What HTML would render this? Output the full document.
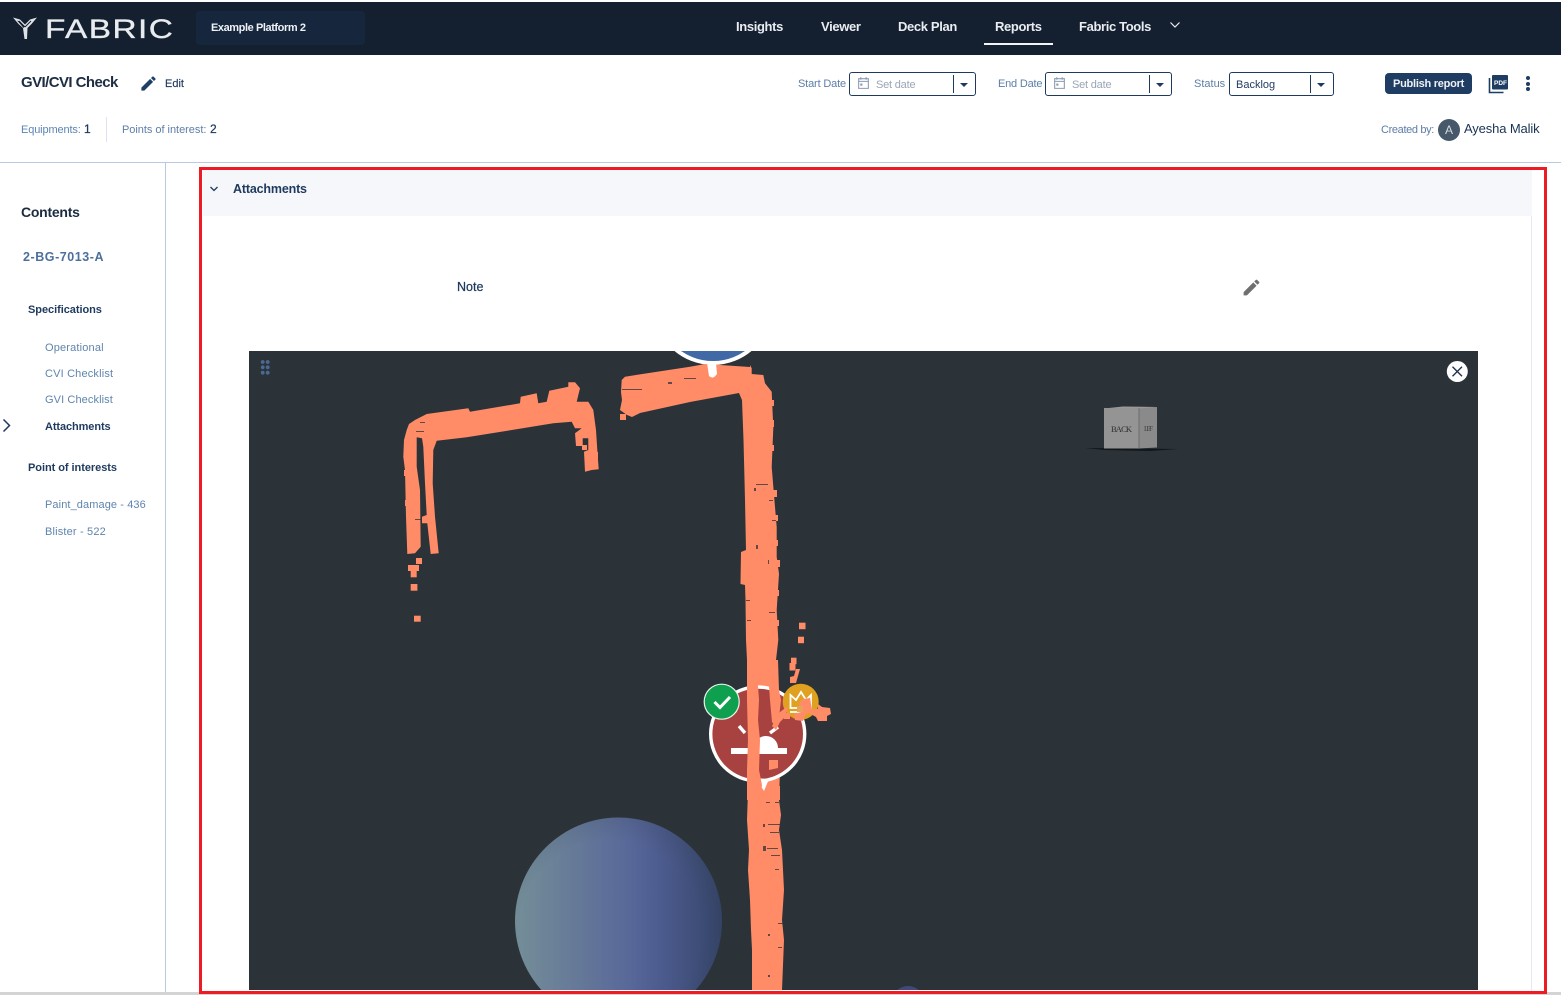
<!DOCTYPE html>
<html lang="en">
<head>
<meta charset="utf-8">
<title>GVI/CVI Check</title>
<style>
html,body{margin:0;padding:0;background:#fff;width:1561px;height:995px;overflow:hidden}
body{position:relative;font-family:"Liberation Sans",sans-serif;color:#1f3a5f}
.a{position:absolute;box-sizing:border-box}
.t{position:absolute;white-space:nowrap;line-height:16px;height:16px}
.nav{font-size:13px;font-weight:bold;color:#e9edf2;letter-spacing:-.36px;top:19px}
.lbl{font-size:11px;color:#5d7ea8;top:76px}
.box{position:absolute;top:72px;height:24px;border:1px solid #1f3a5f;border-radius:3px;background:#fff;box-sizing:border-box}
.sep{position:absolute;top:75px;width:1px;height:18px;background:#1f3a5f}
.caret{position:absolute;top:83px;width:0;height:0;border-left:4px solid transparent;border-right:4px solid transparent;border-top:4px solid #1f3a5f}
.ph{font-size:11px;color:#9aa6b6;top:77px;letter-spacing:-.2px}
.side{font-size:11px;color:#5f84ae;letter-spacing:.17px}
.sideb{font-size:11px;font-weight:bold;color:#1f3a5f}
</style>
</head>
<body>
<!-- top nav -->
<div class="a" style="left:0;top:2px;width:1561px;height:53px;background:#141f2f"></div>
<svg class="a" style="left:12px;top:16px" width="26" height="24" viewBox="0 0 26 24"><path d="M1 1.5 L8 3.5 L13 8.5 L18 3.5 L25 1.5 L19.5 8 L15.5 12 L15 23 L12.5 23 L11 12 L6.5 8 Z M5 4.5 L9.5 9.5 L11.5 12 L12.5 10.5 L8 5.5 Z" fill="#dfe3e7"/><path d="M13 11 L19 5" stroke="#141f2f" stroke-width="1"/><path d="M13 11 L7 5" stroke="#141f2f" stroke-width="1"/></svg>
<div class="t" style="left:45px;top:17px;height:24px;line-height:24px;font-size:27px;color:#e9ecef;letter-spacing:1.2px;transform:scaleX(1.235);transform-origin:0 50%;-webkit-text-stroke:.35px #e9ecef">FABRIC</div>
<div class="a" style="left:196px;top:11px;width:169px;height:34px;background:#15263d;border-radius:3px"></div>
<div class="t" style="left:211px;top:20px;font-size:11px;font-weight:bold;color:#eef1f5;letter-spacing:-.42px">Example Platform 2</div>
<div class="t nav" style="left:736px">Insights</div>
<div class="t nav" style="left:821px">Viewer</div>
<div class="t nav" style="left:898px">Deck Plan</div>
<div class="t nav" style="left:995px">Reports</div>
<div class="t nav" style="left:1079px">Fabric Tools</div>
<svg class="a" style="left:1169px;top:21px" width="12" height="8" viewBox="0 0 12 8"><path d="M1.5 1.5 L6 6 L10.5 1.5" fill="none" stroke="#e9edf2" stroke-width="1.2"/></svg>
<div class="a" style="left:984px;top:43px;width:69px;height:2px;background:#f2f4f7"></div>

<!-- sub header -->
<div class="t" style="left:21px;top:75px;font-size:15px;font-weight:bold;color:#1d2d42;letter-spacing:-.57px">GVI/CVI Check</div>
<svg class="a" style="left:139px;top:74px" width="19" height="19" viewBox="0 0 24 24"><path fill="#1f3f66" d="M3 17.25V21h3.75L17.81 9.94l-3.75-3.75L3 17.25zM20.71 7.04a1 1 0 0 0 0-1.41l-2.34-2.34a1 1 0 0 0-1.41 0l-1.83 1.83 3.75 3.75 1.83-1.83z"/></svg>
<div class="t" style="left:165px;top:76px;font-size:11px;color:#1f3a5f;-webkit-text-stroke:.15px #1f3a5f">Edit</div>
<div class="t" style="left:21px;top:122px;font-size:11px;color:#5d84b3;letter-spacing:-.13px">Equipments:</div>
<div class="t" style="left:84px;top:121px;font-size:12px;color:#1f3a5f;-webkit-text-stroke:.25px #1f3a5f">1</div>
<div class="a" style="left:106px;top:117px;width:1px;height:25px;background:#dde4ef"></div>
<div class="t" style="left:122px;top:122px;font-size:11px;color:#5d7ea8;letter-spacing:-.03px">Points of interest:</div>
<div class="t" style="left:210px;top:121px;font-size:12px;color:#1f3a5f;-webkit-text-stroke:.25px #1f3a5f">2</div>

<div class="t lbl" style="left:798px;letter-spacing:-.15px">Start Date</div>
<div class="box" style="left:849px;width:127px"></div>
<svg class="a" style="left:857px;top:76px" width="13" height="14" viewBox="0 0 12 13"><path d="M1.5 2.5h9v9h-9z M1.5 5h9 M3.5 1v2.5 M8.5 1v2.5" fill="none" stroke="#8b9cb1" stroke-width="1"/><rect x="3" y="7" width="2" height="2" fill="#8b9cb1"/></svg>
<div class="t ph" style="left:876px">Set date</div>
<div class="sep" style="left:953px"></div>
<div class="caret" style="left:960px"></div>

<div class="t lbl" style="left:998px;letter-spacing:-.2px">End Date</div>
<div class="box" style="left:1045px;width:127px"></div>
<svg class="a" style="left:1053px;top:76px" width="13" height="14" viewBox="0 0 12 13"><path d="M1.5 2.5h9v9h-9z M1.5 5h9 M3.5 1v2.5 M8.5 1v2.5" fill="none" stroke="#8b9cb1" stroke-width="1"/><rect x="3" y="7" width="2" height="2" fill="#8b9cb1"/></svg>
<div class="t ph" style="left:1072px">Set date</div>
<div class="sep" style="left:1149px"></div>
<div class="caret" style="left:1156px"></div>

<div class="t lbl" style="left:1194px">Status</div>
<div class="box" style="left:1229px;width:105px"></div>
<div class="t" style="left:1236px;top:77px;font-size:11px;color:#1f3a5f">Backlog</div>
<div class="sep" style="left:1310px"></div>
<div class="caret" style="left:1317px"></div>

<div class="a" style="left:1385px;top:73px;width:87px;height:21px;background:#1f3d63;border-radius:4px"></div>
<div class="t" style="left:1393px;top:76px;font-size:11px;font-weight:bold;color:#eef2f6;letter-spacing:-.25px">Publish report</div>
<svg class="a" style="left:1488px;top:74px" width="21" height="20" viewBox="0 0 21 20"><path d="M1.5 4v14.5h14" fill="none" stroke="#1f3d63" stroke-width="1.6"/><rect x="4" y="1" width="16" height="14.5" rx="1" fill="#1f3d63"/><text x="6" y="11" font-family="Liberation Sans" font-size="6.5" font-weight="bold" fill="#fff">PDF</text></svg>
<div class="a" style="left:1526px;top:76px;width:4px;height:4px;border-radius:50%;background:#1f3d63"></div>
<div class="a" style="left:1526px;top:82px;width:4px;height:4px;border-radius:50%;background:#1f3d63"></div>
<div class="a" style="left:1526px;top:87px;width:4px;height:4px;border-radius:50%;background:#1f3d63"></div>

<div class="t" style="left:1381px;top:122px;font-size:11px;color:#5d7ea8;letter-spacing:-.35px">Created by:</div>
<div class="a" style="left:1438px;top:119px;width:22px;height:22px;border-radius:50%;background:#47586a"></div>
<div class="t" style="left:1438px;top:122px;width:22px;text-align:center;font-size:12px;color:#d5dbe1">A</div>
<div class="t" style="left:1464px;top:121px;font-size:13px;color:#1a3354;letter-spacing:-.13px">Ayesha Malik</div>

<div class="a" style="left:0;top:162px;width:1561px;height:1px;background:#b9c9e1"></div>

<!-- sidebar -->
<div class="a" style="left:165px;top:163px;width:1px;height:829px;background:#b9c9e1"></div>
<div class="t" style="left:21px;top:204px;font-size:14px;font-weight:bold;color:#1a2b40;letter-spacing:-.25px">Contents</div>
<div class="t" style="left:23px;top:249px;font-size:12.5px;font-weight:bold;color:#4d6f9c;letter-spacing:.55px">2-BG-7013-A</div>
<div class="t sideb" style="left:28px;top:302px;letter-spacing:-.05px">Specifications</div>
<div class="t side" style="left:45px;top:340px">Operational</div>
<div class="t side" style="left:45px;top:366px">CVI Checklist</div>
<div class="t side" style="left:45px;top:392px;letter-spacing:.1px">GVI Checklist</div>
<svg class="a" style="left:1px;top:418px" width="11" height="15" viewBox="0 0 11 15"><path d="M2.5 1.5 L8.5 7.5 L2.5 13.5" fill="none" stroke="#1f3a5f" stroke-width="1.5"/></svg>
<div class="t sideb" style="left:45px;top:419px;letter-spacing:-.1px">Attachments</div>
<div class="t sideb" style="left:28px;top:460px;letter-spacing:-.05px">Point of interests</div>
<div class="t side" style="left:45px;top:497px;letter-spacing:.1px">Paint_damage - 436</div>
<div class="t side" style="left:45px;top:524px">Blister - 522</div>

<!-- main panel -->
<div class="a" style="left:203px;top:170px;width:1329px;height:46px;background:#f6f7fb"></div>
<div class="a" style="left:1531px;top:216px;width:1px;height:775px;background:#e3e8f2"></div>
<svg class="a" style="left:209px;top:185px" width="10" height="8" viewBox="0 0 10 8"><path d="M1.5 2 L5 5.5 L8.5 2" fill="none" stroke="#1f3a5f" stroke-width="1.3"/></svg>
<div class="t" style="left:233px;top:181px;font-size:12.5px;font-weight:bold;color:#1f3a5f;letter-spacing:-.17px">Attachments</div>
<div class="t" style="left:457px;top:279px;font-size:12.5px;color:#1f3a5f;-webkit-text-stroke:.25px #1f3a5f">Note</div>
<svg class="a" style="left:1241px;top:277px" width="21" height="21" viewBox="0 0 24 24"><path fill="#6f6f6f" d="M3 17.25V21h3.75L17.81 9.94l-3.75-3.75L3 17.25zM20.71 7.04a1 1 0 0 0 0-1.41l-2.34-2.34a1 1 0 0 0-1.41 0l-1.83 1.83 3.75 3.75 1.83-1.83z"/></svg>

<!-- 3D view -->
<svg class="a" style="left:249px;top:351px" width="1229" height="639" viewBox="249 351 1229 639">
  <defs>
    <linearGradient id="sph" x1="0" y1="0" x2="1" y2="0">
      <stop offset="0" stop-color="#748e98"/>
      <stop offset=".2" stop-color="#6a8098"/>
      <stop offset=".55" stop-color="#586899"/>
      <stop offset=".72" stop-color="#4b5a8c"/>
      <stop offset="1" stop-color="#35456a"/>
    </linearGradient>
    <radialGradient id="shade" cx=".46" cy=".55" r=".55">
      <stop offset=".8" stop-color="#2b3339" stop-opacity="0"/>
      <stop offset="1" stop-color="#2b3339" stop-opacity=".12"/>
    </radialGradient>
  </defs>
  <rect x="249" y="351" width="1229" height="639" fill="#2b3339"/>
  <!-- spheres -->
  <circle cx="618.5" cy="921" r="103.5" fill="url(#sph)"/>
  <circle cx="618.5" cy="921" r="103.5" fill="url(#shade)"/>
  <ellipse cx="908" cy="1002" rx="16" ry="16" fill="#3f4a78"/>
  <!-- blue top marker -->
  <circle cx="713" cy="305" r="58" fill="#4169a5" stroke="#fff" stroke-width="4"/>
  <!-- cube -->
  <path d="M1085 448 L1178 449 L1150 451 L1105 450Z" fill="#11171b"/>
  <path d="M1104 408.5 L1123 406.5 L1157 407 L1139 409 Z" fill="#9a9a9a"/>
  <rect x="1104" y="408" width="35" height="40.5" fill="#949494"/>
  <path d="M1139 408.5 L1157 407 L1157 447.5 L1139 448.5Z" fill="#8a8a8a"/>
  <path d="M1139 408 V449" stroke="#5f5f5f" stroke-width=".7"/>
  <text x="1111" y="432" font-family="Liberation Serif" font-size="8.5" fill="#2e2e2e" textLength="21">BACK</text>
  <text x="1144" y="431" font-family="Liberation Serif" font-size="7" fill="#3d3d3d" textLength="9">LEF</text>
  <!-- orange left shape -->
  <g fill="#ff8c66">
    <path d="M406.7 430 L409 424 L415 420 L426.7 414 L468.3 408.3 L470 411.7 L520 403.3 L520.7 396.7 L536.7 393.3 L538.3 403.3 L546.7 401.7 L549.3 390.7 L568.3 386.7 L568.3 382.3 L575 382.3 L580 388.3 L576.7 401.7 L588.3 401.7 L593.3 410 L596 430 L597.3 450 L598.7 469.3 L591.7 470 L585 471.7 L584 451.7 L588.3 450 L588.3 438.3 L582.7 438.3 L582.7 446 L576 446 L575 433.3 L581.7 428.3 L575 428.3 L571.7 421.7 L553.3 423.3 L466.7 437.3 L436.7 440.7 L433.3 450 L432.7 483.3 L435 516.7 L438.7 553.3 L430.7 554 L427.3 523.3 L422 523.3 L422 516.7 L426.7 515 L425 483.3 L423.3 446.7 L422 438.3 L416.7 437.3 L416.7 466.7 L420 490 L420.7 546.7 L415 553.3 L407.3 554 L406 516.7 L405 470 L403.3 456.7 L404 440 Z"/>
    <rect x="416" y="558" width="6" height="6"/>
    <rect x="408" y="565" width="11" height="6"/>
    <rect x="410.7" y="570" width="6" height="7.3"/>
    <rect x="410.7" y="584" width="6.7" height="6.7"/>
    <rect x="414" y="615.7" width="6.7" height="6"/>
    <rect x="620" y="414" width="6" height="6"/>
    <!-- right L + band -->
    <path d="M621.7 380 L625 376.7 L690 366.7 L705 364 L750 367 L750 365 L751.7 368.3 L751.7 374 L763.3 375 L765 383.3 L771.7 391.7 L773.3 428 L771.7 467 L775 507 L776.7 527 L776.7 557 L779 573.7 L776.7 610 L778.3 640 L776 660 L778 690 L780 720 L780 770 L779 800 L781 815 L779 830 L782 850 L783 870 L784 890 L782 920 L784 940 L782 990 L752 990 L752 950 L751 930 L750 900 L748 870 L749 850 L747 820 L748 790 L747 760 L748 720 L747 690 L747 660 L746 640 L745.5 600 L745 585 L740.5 584 L741 552 L746 550 L745 500 L743.5 440 L742 400 L739 393 L690 402 L640 413 L632 417 L627 415 L620 410 L622 400 L621 392 Z"/>
    <!-- jagged edge blocks -->
    <rect x="768" y="400" width="6" height="6"/><rect x="769" y="420" width="5" height="7"/><rect x="769" y="445" width="5" height="6"/>
    <rect x="771" y="490" width="6" height="7"/><rect x="772" y="515" width="6" height="6"/><rect x="773" y="540" width="5" height="6"/>
    <rect x="775" y="560" width="5" height="7"/><rect x="774" y="590" width="5" height="6"/><rect x="775" y="620" width="4" height="6"/>
    <rect x="744" y="440" width="4" height="7"/><rect x="745" y="480" width="4" height="6"/><rect x="746" y="510" width="4" height="7"/>
    <rect x="405" y="500" width="4" height="6"/><rect x="404" y="470" width="4" height="6"/><rect x="582" y="445" width="5" height="5"/>
    <rect x="590" y="452" width="8" height="6"/><rect x="577" y="418" width="8" height="8"/><rect x="586" y="428" width="7" height="7"/>
  </g>
  <!-- white stem of top marker -->
  <path d="M707 363 H716 L717 374 Q713 380 709 376 Z" fill="#fff"/>
  <!-- main marker (partially over band) -->
  <circle cx="757.7" cy="734" r="47" fill="#a84240" stroke="#fff" stroke-width="3.4"/>
  <path d="M755 778 L769 779 L764 791 Z" fill="#fff"/>
  <rect x="731" y="748" width="56" height="6" fill="#fff"/>
  <path d="M754 748 A12 12 0 0 1 778 748 Z" fill="#fff"/>
  <path d="M739 726 L745 733 M770 733 L778 727" stroke="#fff" stroke-width="3.4"/>
  <!-- green check -->
  <circle cx="721.7" cy="701.7" r="17.5" fill="#0fa04f" stroke="#e9f4ee" stroke-width="1.2"/>
  <path d="M714.5 702 L720 707.5 L730 697" fill="none" stroke="#fff" stroke-width="3"/>
  <!-- crown badge -->
  <circle cx="800.7" cy="701.7" r="18" fill="#e0a020"/>
  <path d="M790.5 708 V695 L796 700 L801 692 L806 700 L811 695 V708 Z" fill="none" stroke="#fff" stroke-width="1.8"/>
  <path d="M790 712 H812" stroke="#fff" stroke-width="1.8"/>
  <!-- orange over marker -->
  <g fill="#ff8c66">
    <path d="M747 660 L760 660 L758 686 L759 700 L758 720 L760 740 L759 770 L762 785 L760 800 L747 800 L747 770 L748 740 L747 700Z"/>
    <path d="M767 660 L778 660 L779 690 L781 700 L779 718 L775 726 L772 722 L770 700 L769 686 Z"/>
    <path d="M769 760 L778 760 L778 768 L769 770Z"/>
    <path d="M772 786 L780 786 L780 800 L772 800Z"/>
    <path d="M780 712 L788 706 L785 717 L780 722 L776 730 L772 726Z"/>
    <rect x="799" y="622.7" width="6.5" height="6.5"/>
    <rect x="798" y="636.7" width="6" height="6.5"/>
    <rect x="791" y="657.7" width="5.5" height="6.5"/>
    <rect x="789.5" y="663" width="6" height="7.5"/>
    <path d="M796 669 L800 669 L798 676 L796 683 L790 683 L790 677 L794 676Z"/>
    <path d="M803 699 L810 698 L812 710 L816 709 L818 709 L818 704 L822 707 L830 708 L831 714 L827 716 L827 721 L818 721 L816 717 L809 713 L805 715 L803 721 L795 720 L794 714 L801 712 L799 703Z"/>
    <rect x="784" y="713" width="6" height="6"/>
    <rect x="797" y="706" width="6" height="6" fill="#e9a25a"/>
  </g>
  <!-- specks -->
  <g fill="#2b3339" fill-opacity=".75">
    <rect x="622" y="389" width="20" height="1"/><rect x="668" y="382" width="4" height="2"/><rect x="684" y="378" width="12" height="1"/>
    <rect x="756" y="484" width="12" height="1"/><rect x="754" y="488" width="2" height="3"/><rect x="769" y="500" width="4" height="1"/>
    <rect x="756" y="545" width="2" height="4"/><rect x="768" y="560" width="1" height="4"/><rect x="746" y="600" width="4" height="1"/>
    <rect x="747" y="620" width="4" height="1"/><rect x="772" y="520" width="4" height="1"/><rect x="769" y="612" width="6" height="1"/>
    <rect x="763" y="824" width="2" height="3"/>
    <rect x="766" y="802" width="4" height="1"/><rect x="775" y="802" width="4" height="1"/><rect x="768" y="824" width="12" height="1"/>
    <rect x="770" y="832" width="9" height="1"/><rect x="767" y="848" width="11" height="1"/><rect x="763" y="846" width="3" height="5"/>
    <rect x="771" y="855" width="9" height="1"/><rect x="775" y="869" width="4" height="1"/><rect x="778" y="923" width="5" height="1"/>
    <rect x="768" y="934" width="2" height="2"/><rect x="778" y="947" width="4" height="1"/><rect x="768" y="975" width="2" height="2"/>
    <rect x="420" y="422" width="5" height="1"/><rect x="416" y="431" width="8" height="1"/><rect x="415" y="519" width="7" height="1"/>
  </g>
  <!-- drag dots -->
  <g fill="#4a6a95">
    <circle cx="262.7" cy="362" r="1.9"/><circle cx="267.7" cy="362" r="1.9"/>
    <circle cx="262.7" cy="367.3" r="1.9"/><circle cx="267.7" cy="367.3" r="1.9"/>
    <circle cx="262.7" cy="372.7" r="1.9"/><circle cx="267.7" cy="372.7" r="1.9"/>
  </g>
  <!-- close -->
  <circle cx="1457.3" cy="371.5" r="10.5" fill="#fff"/>
  <path d="M1452.5 366.7 L1462 376.3 M1462 366.7 L1452.5 376.3" stroke="#22364f" stroke-width="1.4"/>
</svg>

<!-- scroll strip & red annotation -->
<div class="a" style="left:0;top:992px;width:1561px;height:3px;background:#d4d4d4"></div>
<div class="a" style="left:199px;top:167px;width:1348px;height:827px;border:3px solid #ed1c24"></div>
</body>
</html>
